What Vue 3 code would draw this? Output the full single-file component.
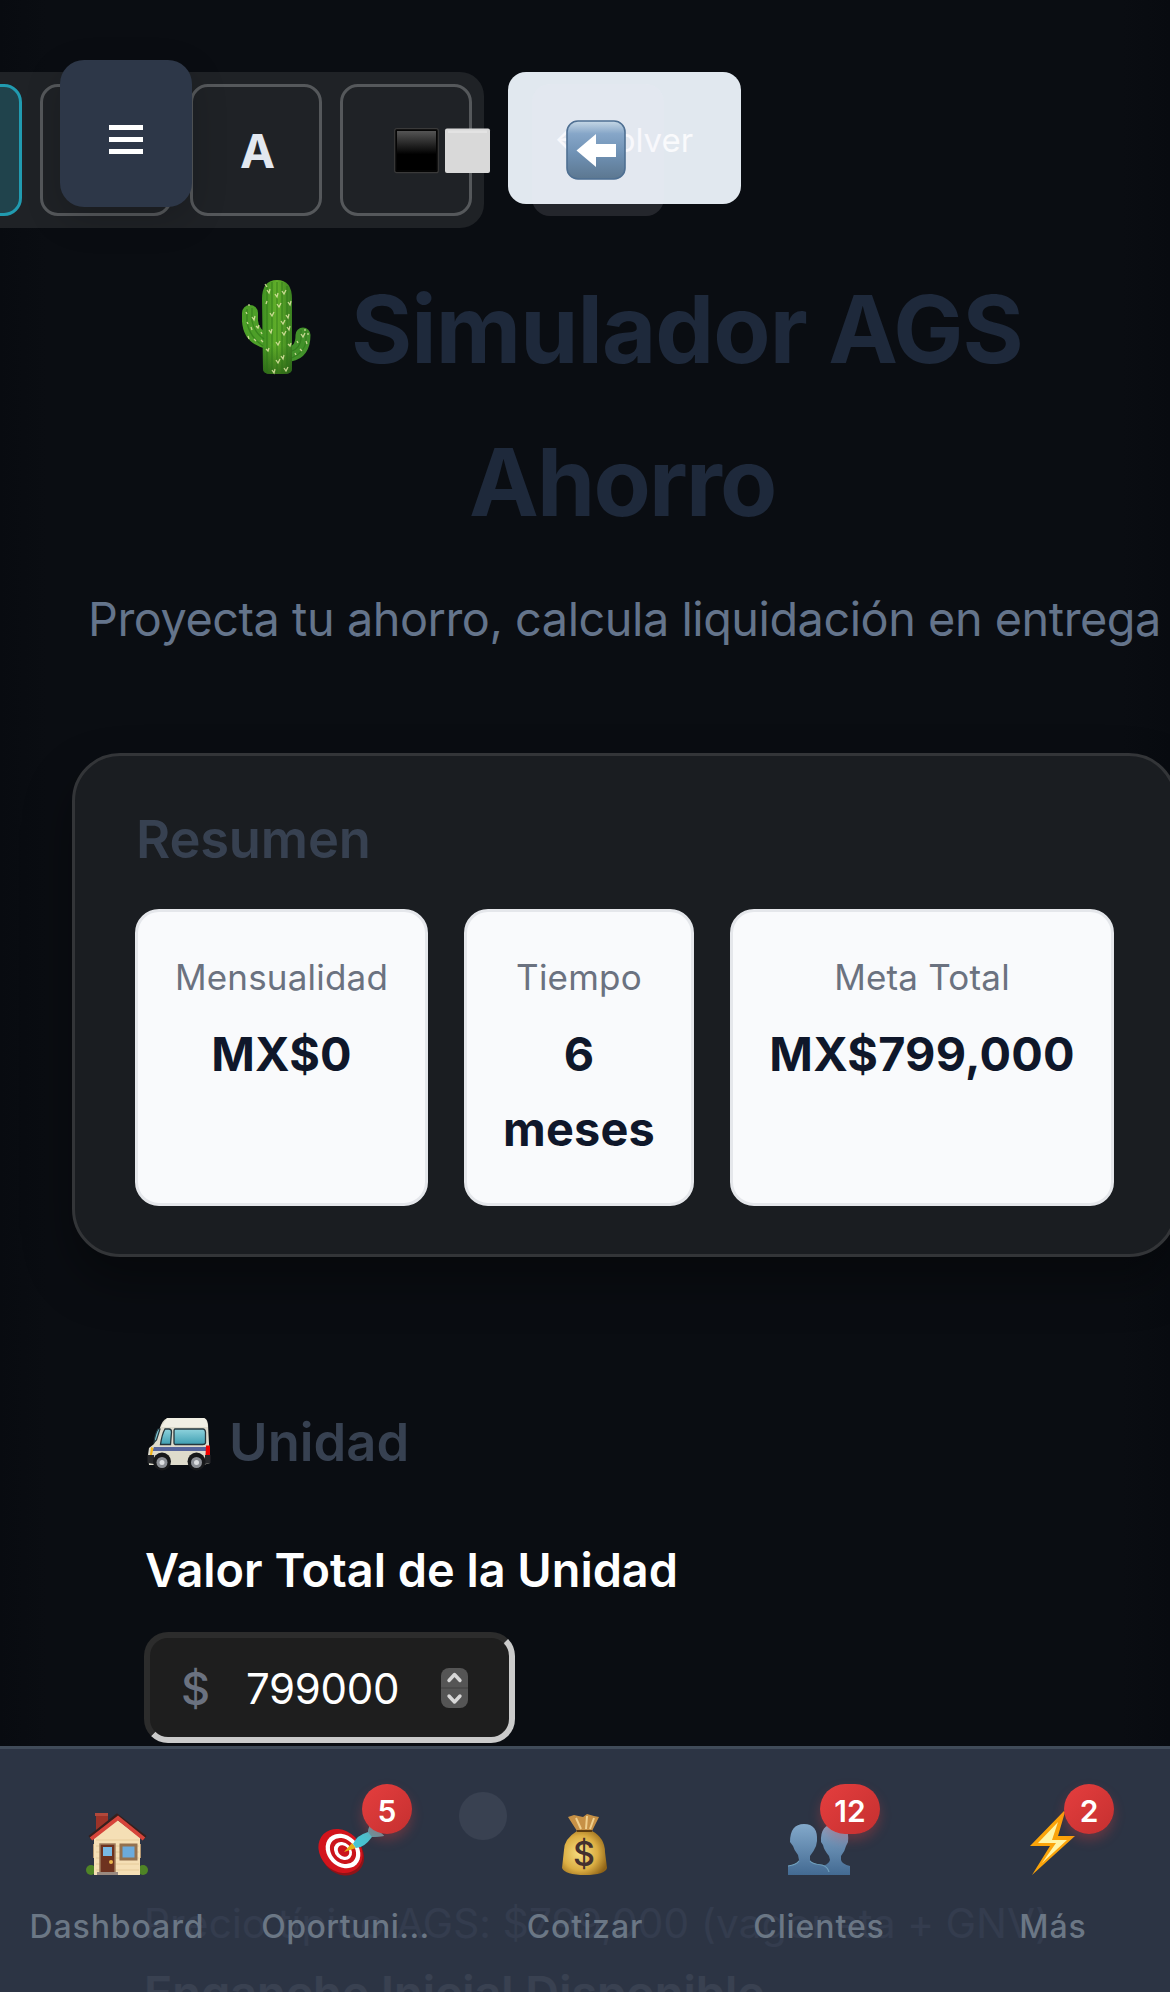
<script setup>
const tiles = [
  { label: 'Mensualidad', value: 'MX$0', cls: 't1' },
  { label: 'Tiempo', value: '6 meses', cls: 't2' },
  { label: 'Meta Total', value: 'MX$799,000', cls: 't3' },
]
const tabs = [
  { id: 'home', label: 'Dashboard' },
  { id: 'target', label: 'Oportuni...', badge: 5 },
  { id: 'money', label: 'Cotizar' },
  { id: 'people', label: 'Clientes', badge: 12 },
  { id: 'bolt', label: 'Más', badge: 2 },
]
</script>

<template>
  <div class="page">
    <header class="top">
      <div class="toolbar">
        <button class="tool active"></button>
        <button class="tool"></button>
        <button class="tool letter">A</button>
        <button class="tool squares">
          <svg width="97" height="46" viewBox="0 0 97 46">
            <defs>
              <linearGradient id="blk" x1="0" y1="0" x2="0" y2="1">
                <stop offset="0" stop-color="#555" /><stop offset=".6" stop-color="#000" />
              </linearGradient>
            </defs>
            <rect x=".7" y=".7" width="43.6" height="44" rx="2" fill="#050505" stroke="#3a3a3a" stroke-width="1.2" />
            <rect x="3" y="3" width="39" height="39" fill="url(#blk)" />
            <rect x="51" y=".5" width="45" height="44.5" rx="2" fill="#d9d9d9" />
            <rect x="54" y="2.5" width="39" height="2.5" fill="#e3e3e3" />
          </svg>
        </button>
      </div>
      <button class="volver"><span>← Volver</span></button>
      <button class="menu"><i></i><i></i><i></i></button>
      <button class="back">
        <svg width="60" height="60" viewBox="0 0 60 60">
          <defs>
            <linearGradient id="bk" x1="0" y1="0" x2="0" y2="1">
              <stop offset="0" stop-color="#c6d8e6" /><stop offset=".22" stop-color="#86a6c8" />
              <stop offset=".55" stop-color="#7092b5" /><stop offset="1" stop-color="#5c7790" />
            </linearGradient>
          </defs>
          <rect x="1" y="1" width="58" height="58" rx="11" fill="url(#bk)" stroke="#4e6f92" stroke-width="1.6" />
          <path d="M10.500 30.500 30 14V24H50V37H30V47Z" fill="#fff" />
        </svg>
      </button>
    </header>

    <main>
      <h1>
        <span class="line1"><svg class="cactus" width="70" height="97" viewBox="0 0 70 97">
          <defs>
            <linearGradient id="cac" x1="0" x2="1"><stop offset="0" stop-color="#3f8f22" /><stop offset=".5" stop-color="#62b02a" /><stop offset="1" stop-color="#3a8020" /></linearGradient>
            <linearGradient id="cacs" x1="0" y1="0" x2="0" y2="1"><stop offset=".7" stop-color="#1f4d10" stop-opacity="0" /><stop offset="1" stop-color="#1f4d10" stop-opacity=".6" /></linearGradient>
          </defs>
          <path d="M8 34V42Q9 58 26 62" fill="none" stroke="#4d9f28" stroke-width="16" stroke-linecap="round" />
          <path d="M61 56Q61 73 48 75" fill="none" stroke="#42912a" stroke-width="15" stroke-linecap="round" />
          <path d="M20 20Q20 1 35 1T50 20V90Q50 95 42 95H29Q21 95 21 90Z" fill="url(#cac)" />
          <path d="M20 20Q20 1 35 1T50 20V90Q50 95 42 95H29Q21 95 21 90Z" fill="url(#cacs)" />
          <path d="M25 8V93M30 3V94M35 3V94M40 3V94M45 7V93M5 30V44Q8 58 21 67M10 29V42Q12 53 22 60M59 51V60Q58 69 50 72M64 52V62Q63 73 50 79" fill="none" stroke="#2c7418" stroke-width="1.3" opacity=".6" />
          <path d="m25 11 2 3 1-4M23 5l2 3M40 12l2 3 2-4M33 15l2 3 1-4M24 25l1 -3M35 25l2 3 2-4M46 23l2 3 1-4M28 34l2 3 2-4M39 42l2 3 2-4M44 36l2 3 1-4M27 51l2 3 1-4M40 53l2 3 2-4M45 48l2 3 1-4M34 63l2 3 2-4M24 70l2 2 1-3M39 77l2 3 1-4M34 81l2 3 2-4M30 91l2 3 1-4M42 89l2 3 2-4M46 65l2 2 1-3M4 33l1 2M10 38l2 3 1-4M5 43l1 2M14 47l2 2 1-3M9 48l1 3M6 57l1 3M12 60l2 2M19 61l2 2M19 53l1 2M59 55l2 3 2-4M55 62l1 2M64 62l1 3M58 70l2 2M53 74l1 2M63 50v2M7 25v2M66 54v2" fill="none" stroke="#dfe5a6" stroke-width="1.300" opacity=".85" />
        </svg><span class="t-sim">Simulador AGS</span></span>
        <span class="line2">Ahorro</span>
      </h1>
      <p class="sub">Proyecta tu ahorro, calcula liquidación en entrega</p>

      <section class="card">
        <h2>Resumen</h2>
        <div class="tiles">
          <div v-for="t in tiles" :key="t.label" class="tile" :class="t.cls">
            <span class="lab">{{ t.label }}</span>
            <strong>{{ t.value }}</strong>
          </div>
        </div>
      </section>

      <section class="unit">
        <h2>
          <svg class="van" width="64" height="54" viewBox="0 0 64 54">
            <defs><linearGradient id="win" x1="0" y1="0" x2="0" y2="1"><stop offset="0" stop-color="#8fd3dd" /><stop offset="1" stop-color="#3f9fb2" /></linearGradient></defs>
            <path d="M1 38 2 31 7 27 14 8Q17 1 22 1H56Q60 1 61 7L63 46 56 48H2Z" fill="#dedbcc" />
            <path d="M20 1H57Q60 2 60 7L61 10H14Z" fill="#f1efe4" />
            <path d="M7 30H62V34H5Z" fill="#56659c" />
            <path d="M28 12H56Q58 12 58.500 15V26Q58 27.500 56 27.500H28Q27 27 27 26V15Q27 12 28 12Z" fill="url(#win)" stroke="#25363c" stroke-width="1.3" />
            <path d="M18 12H22Q24.500 12 24.500 15L23.500 27.500H13.500Q15 17 18 12Z" fill="url(#win)" stroke="#25363c" stroke-width="1.3" />
            <path d="M13 12 9.500 23 7 25.500Q8 17 11 12Z" fill="#7cc3d0" stroke="#25363c" stroke-width="1.2" />
            <path d="M59 28.500H63V38H58.500Z" fill="#f00000" /><path d="M4 30 6.500 31 5 38H3Z" fill="#f4b61c" />
            <path d="M.5 38H7V47L.5 46ZM58 38H63.500V46L58 47Z" fill="#26272a" />
            <circle cx="15" cy="44.500" r="9" fill="#17181a" /><circle cx="49.500" cy="44.500" r="9" fill="#17181a" />
            <circle cx="15" cy="45.500" r="5.500" fill="#8d9096" /><circle cx="49.500" cy="45.500" r="5.500" fill="#8d9096" />
            <circle cx="15" cy="45.500" r="2.500" fill="#dcdee0" /><circle cx="49.500" cy="45.500" r="2.500" fill="#dcdee0" />
          </svg>
          <span>Unidad</span>
        </h2>
        <label>Valor Total de la Unidad</label>
        <div class="field">
          <span class="cur">$</span>
          <span class="num">799000</span>
          <svg width="27" height="40" viewBox="0 0 27 40">
            <rect width="27" height="40" rx="8" fill="#555" />
            <path d="M0 20H27" stroke="#474747" stroke-width="1.5" />
            <path d="M8 12.500 13.500 6.500 19 12.500M8 28 13.500 34 19 28" fill="none" stroke="#d8d8d8" stroke-width="3.400" stroke-linecap="round" stroke-linejoin="round" />
          </svg>
        </div>
        <div class="range"><i></i></div>
        <p class="hint">Precio típico AGS: $799,000 (vagoneta + GNV)</p>
        <p class="next">Enganche Inicial Disponible</p>
      </section>
    </main>

    <nav>
      <a v-for="t in tabs" :key="t.id" :class="t.id">
        <span class="ico">
          <svg v-if="t.id === 'home'" width="62" height="63" viewBox="0 0 62 63">
            <path d="M10 1H22V18H10Z" fill="#9c3328" /><path d="M9 0H22V3H9Z" fill="#b2483b" />
            <circle cx="5" cy="57" r="5" fill="#4f8426" /><circle cx="57" cy="57" r="5" fill="#4f8426" />
            <path d="M7 31H9V45H7ZM53 31H55V45H53Z" fill="#b29672" />
            <path d="M8 24 31 5 54 24V62H8Z" fill="#f5dfb5" />
            <path d="M10 27H53M10 33H53M10 39H53M10 45H53M10 51H53M10 57H53" stroke="#e6cb9a" stroke-width="1" />
            <path d="M4 25 31 3.500 59 25" fill="none" stroke="#37201e" stroke-width="5" />
            <path d="M5 26 32 5 58 26" fill="none" stroke="#d6443a" stroke-width="4" />
            <path d="M14 31H29V60H14Z" fill="#6e321f" stroke="#a07d5d" stroke-width="1.500" />
            <path d="M17 34H26V43H17Z" fill="#79b9e4" /><circle cx="25" cy="49" r="2" fill="#e9b54d" />
            <path d="M35 32H50V46H35Z" fill="#6cabdc" stroke="#93714f" stroke-width="3" />
            <path d="M11 59H32V62H11Z" fill="#9a8a80" />
          </svg>
          <svg v-else-if="t.id === 'target'" width="66" height="56" viewBox="0 0 66 56">
            <ellipse cx="24" cy="33.500" rx="20" ry="24" transform="rotate(-45 24 33.500)" fill="#8f1318" />
            <ellipse cx="22.500" cy="31" rx="20" ry="24" transform="rotate(-45 22.500 31)" fill="#d3141c" />
            <ellipse cx="25" cy="31" rx="15.500" ry="19" transform="rotate(-45 25 31)" fill="#fff" />
            <ellipse cx="25" cy="31" rx="11.500" ry="14.500" transform="rotate(-45 25 31)" fill="#cb141b" />
            <ellipse cx="25" cy="31" rx="8" ry="10" transform="rotate(-45 25 31)" fill="#fff" />
            <ellipse cx="25.500" cy="31" rx="5" ry="6.500" transform="rotate(-45 25.500 31)" fill="#cb141b" />
            <path d="M26 32 34 23 38 28Z" fill="#e6ae16" />
            <path d="M35 24Q39 15 50 12L52 3 58 8 66 16 54 17Q46 28 38 28Z" fill="#48c4d2" />
            <path d="M50 12 52 3 58 8 66 16 54 17Z" fill="#5d9da8" />
          </svg>
          <svg v-else-if="t.id === 'money'" width="47" height="62" viewBox="0 0 47 62">
            <defs><radialGradient id="bag" cx=".4" cy=".5" r=".65"><stop offset="0" stop-color="#f7df83" /><stop offset=".6" stop-color="#dcae43" /><stop offset="1" stop-color="#8f6317" /></radialGradient></defs>
            <path d="M7 3 13 1 22 3 26 0 33 2 38 3 31 17H16Z" fill="#c79146" />
            <path d="M15 4 20 15M26 2 25 15M33 4 29 15" stroke="#f0cf8d" stroke-width="2" fill="none" />
            <path d="M16 17H31Q44 24 44 38L46 54Q44 61 24 61T1 54L3 36Q3 25 16 17Z" fill="url(#bag)" />
            <path d="M16 17H31" stroke="#5d3c10" stroke-width="2" />
            <text x="23" y="52" text-anchor="middle" font-family="Inter, sans-serif" font-weight="500" font-size="34" fill="#43302f">$</text>
          </svg>
          <svg v-else-if="t.id === 'people'" width="64" height="53" viewBox="0 0 64 53">
            <defs><linearGradient id="ppl" x1="0" y1="0" x2="0" y2="1"><stop offset="0" stop-color="#83a9cb" /><stop offset="1" stop-color="#436a92" /></linearGradient></defs>
            <path d="M32 52V44Q42 42 43 37L42 33Q37 27 36 22L34 19Q33 1 48 1T61 19L59 23Q58 28 54 33V37Q55 41 63 43V52Z" fill="url(#ppl)" />
            <path d="M1 52V43Q11 41 12 37L11 32Q7 27 6 23L3 19Q3 1 17 1T30 18L29 23Q27 28 23 33V37Q24 41 35 42 42 45 43 52Z" fill="url(#ppl)" />
            <path d="M23 38Q25 41 35 42 41 44 42 49M1 43Q9 42 12 38" fill="none" stroke="#6fa0bd" stroke-width="1.200" />
          </svg>
          <svg v-else width="47" height="65" viewBox="0 0 47 65">
            <path d="M35 0 1 35H21L3 64 46 25H29L36 1Z" fill="#fba40a" />
            <path d="M29 11 9 32H27L13 52 38 29H23Z" fill="#fff5a6" />
          </svg>
          <b v-if="t.badge">{{ t.badge }}</b>
        </span>
        <span class="cap">{{ t.label }}</span>
      </a>
    </nav>
  </div>
</template>

<style>
body { background: #0a0d12; overflow: hidden; }
</style>

<style scoped>
* { box-sizing: border-box; margin: 0; }
.page { position: relative; width: 1170px; height: 1992px; overflow: hidden; background: linear-gradient(90deg, #080b10 0, #0a0d12 4%, #0a0d12 96%, #080b10 100%); font-family: Inter, "Liberation Sans", sans-serif; }
button { font: inherit; padding: 0; border: 0; }
.top { position: relative; height: 228px; padding-top: 72px; display: flex; align-items: flex-start; gap: 24px; }
.toolbar { flex: none; display: flex; gap: 18px; width: 606px; height: 156px; margin-left: -122px; padding: 12px; border-radius: 24px; background: #1f2226; }
.tool { flex: none; width: 132px; height: 132px; border: 3px solid #55585b; border-radius: 18px; background: transparent; display: flex; align-items: center; justify-content: center; }
.tool.active { background: #20434c; border-color: #219bb0; }
.letter { color: #e2e8f0; font-size: 47px; font-weight: 700; padding: 0 0 0 3px; }
.squares svg { flex: none; margin: 1px 0 0 72px; }
.volver { flex: none; width: 233px; height: 132px; border-radius: 18px; background: #e1e8ef; color: #f9fafc; font-size: 33px; white-space: nowrap; }
.volver span { position: relative; top: 2px; left: -1px; }
.menu { position: absolute; left: 60px; top: 60px; width: 132px; height: 147px; border-radius: 24px; background: #2d3748; box-shadow: 0 12px 36px rgba(0, 0, 0, .18); display: flex; flex-direction: column; align-items: center; justify-content: center; gap: 7px; padding-top: 11px; }
.menu i { width: 34px; height: 5px; background: #fff; }
.back { position: absolute; left: 532px; top: 84px; width: 132px; height: 132px; border-radius: 18px; background: rgba(250, 240, 255, .115); display: flex; align-items: center; justify-content: center; padding: 0 4px 0 0; }
h1 { height: 307px; margin-top: 25px; font-size: 93.5px; line-height: 153px; font-weight: 700; color: #1e293b; display: flex; flex-direction: column; }
.line1 { display: flex; align-items: center; height: 153px; padding-left: 242px; white-space: nowrap; letter-spacing: -.9px; }
.cactus { flex: none; margin-right: 39px; margin-top: -4px; }
.line2 { padding-left: 469px; letter-spacing: -1.8px; }
.sub { margin-top: 21px; padding-left: 88px; height: 77px; line-height: 77px; font-size: 46.8px; letter-spacing: -.46px; color: #64748b; white-space: nowrap; }
.card { margin: 95px 0 0 72px; width: 1105px; height: 504px; padding: 45px 60px 48px; border: 3px solid #333538; border-radius: 48px; background: #1a1d21; box-shadow: 0 24px 48px rgba(0, 0, 0, .36); }
h2 { font-size: 52.5px; font-weight: 600; color: #374151; line-height: 76px; }
.card h2 { padding-left: 1px; letter-spacing: -.2px; }
.tiles { display: flex; gap: 36px; margin-top: 32px; height: 297px; }
.tile { flex: none; border: 3px solid #e5e7eb; border-radius: 24px; background: #f9fafc; padding: 36px 0; display: flex; flex-direction: column; align-items: center; text-align: center; }
.t1 { width: 293px; } .t2 { width: 230px; padding-left: 34px; padding-right: 34px; } .t3 { width: 384px; }
.lab { font-size: 35px; line-height: 58px; color: #6b7280; white-space: nowrap; letter-spacing: .2px; }
.tile strong { margin-top: 11px; font-size: 46.8px; line-height: 75px; font-weight: 700; color: #0f172a; letter-spacing: .2px; }
.unit { padding: 147px 0 0 144px; }
.unit h2 { display: flex; align-items: center; gap: 18px; padding-left: 3px; height: 76px; }
.van { margin-top: 4px; }
label { display: block; margin-top: 52px; padding-left: 1px; height: 77px; line-height: 77px; font-size: 46.8px; font-weight: 600; color: #fff; white-space: nowrap; }
.field { margin-top: 23px; width: 371px; height: 111px; border: 6px solid; border-color: #2c2c2c #cbcbcb #cbcbcb #2c2c2c; border-radius: 24px; background: #1e1e1e; display: flex; align-items: center; padding: 1px 0 0 31px; }
.cur { font-size: 45px; font-weight: 500; color: #6b7280; width: 65px; }
.num { font-size: 42px; letter-spacing: -.3px; color: #fff; width: 195px; padding-top: 1px; }
.range { height: 48px; margin: 49px 0 0; padding-left: 315px; }
.range i { display: block; width: 48px; height: 48px; border-radius: 50%; background: #f0f0f0; }
.hint { margin-top: 50px; height: 67px; line-height: 67px; font-size: 40.5px; letter-spacing: .2px; color: #94a3b8; white-space: nowrap; }
.next { height: 77px; line-height: 77px; font-size: 46.8px; font-weight: 600; color: #fff; white-space: nowrap; margin-top: -2px; }
nav { position: absolute; left: 0; right: 0; bottom: 0; height: 246px; border-top: 3px solid #404b59; background: rgba(46, 55, 72, .95); display: flex; }
nav a { width: 234px; display: flex; flex-direction: column; align-items: center; }
.ico { position: relative; margin-top: 60px; width: 72px; height: 68px; display: flex; align-items: flex-end; justify-content: center; }
.ico svg { margin-bottom: 1px; margin-right: 1px; }
.money .ico svg, .bolt .ico svg { margin-right: 2px; }
.ico b { position: absolute; top: -25px; right: -25px; min-width: 50px; height: 50px; padding: 0 14px; border-radius: 25px; background: linear-gradient(135deg, #e53e3e, #c53030); box-shadow: 0 6px 12px rgba(229, 62, 62, .3); color: #fff; font-size: 30px; line-height: 54px; font-weight: 600; text-align: center; }
.people .ico b { min-width: 60px; padding: 0; }
.cap { margin-top: 26px; font-size: 32px; line-height: 48px; font-weight: 500; color: #6b7785; white-space: nowrap; letter-spacing: .9px; }
.target .cap { letter-spacing: .5px; margin-left: -11px; }
</style>
